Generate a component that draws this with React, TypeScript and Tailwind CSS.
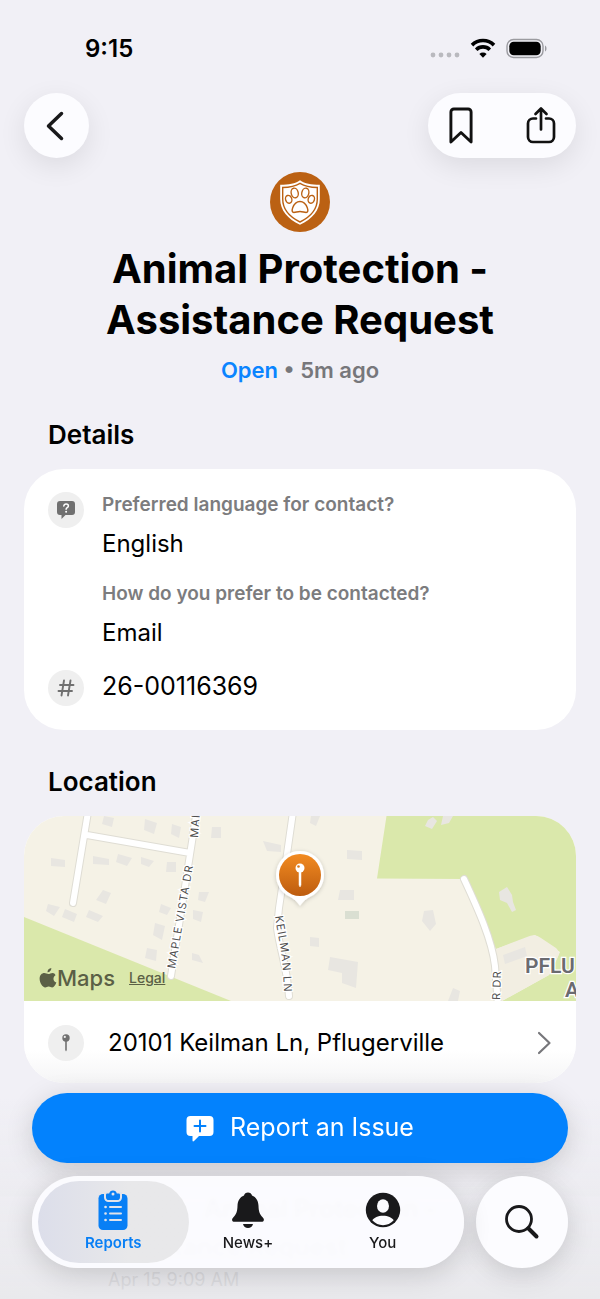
import type { ReactNode } from "react";

function StatusIcons() {
  return (
    <svg width="118" height="22" viewBox="0 0 118 22" aria-hidden="true">
      <g fill="#b9b9be">
        <circle cx="3" cy="17" r="2.4" />
        <circle cx="11" cy="17" r="2.4" />
        <circle cx="19" cy="17" r="2.4" />
        <circle cx="27" cy="17" r="2.4" />
      </g>
      <g fill="none" stroke="#000" strokeWidth="3.6">
        <path d="M42 7.1a15.6 15.6 0 0 1 22 0" />
        <path d="M46.2 11.7a9.7 9.7 0 0 1 13.6 0" />
      </g>
      <path d="M53 19.700l-3.600-3.700a5.100 5.100 0 0 1 7.200 0z" fill="#000" />
      <rect x="77" y="1.500" width="36" height="18" rx="6.500" fill="none" stroke="#9b9ba0" strokeWidth="1.400" />
      <rect x="79.300" y="3.800" width="31.400" height="13.400" rx="4.400" fill="#000" />
      <path d="M115 7.500c2 .8 2 5.200 0 6z" fill="#9b9ba0" />
    </svg>
  );
}

function PawShield() {
  return (
    <svg width="60" height="60" viewBox="0 0 60 60" aria-hidden="true">
      <circle cx="30" cy="30" r="30" fill="#bb6113" />
      <path d="M30 8.2c5 3.4 11 4.6 19.8 4.6V27c0 11.500-7.500 20-19.800 25.800C17.700 47 10.200 38.500 10.200 27V12.800C19 12.800 25 11.600 30 8.200z" fill="#fff" />
      <g fill="none" stroke="#bb6113" strokeWidth="1.400">
        <path d="M30 11.300c4.700 2.800 10 4 17.300 4.200V27c0 10.200-6.600 17.700-17.300 23C19.300 44.700 12.700 37.200 12.700 27V15.500C20 15.300 25.300 14.100 30 11.300z" />
        <ellipse cx="24.700" cy="21" rx="3.500" ry="4.900" transform="rotate(-14 24.700 21)" />
        <ellipse cx="35.300" cy="21" rx="3.500" ry="4.900" transform="rotate(14 35.300 21)" />
        <ellipse cx="18.700" cy="27.300" rx="3.100" ry="4" transform="rotate(-18 18.700 27.300)" />
        <ellipse cx="41.300" cy="27.300" rx="3.100" ry="4" transform="rotate(18 41.300 27.300)" />
        <path d="M30 29.500c4.600 0 6.200 3.300 7.300 6.300 1.100 3 .5 4.700-1.200 4.700-2 0-3.500-1-6.100-1s-4.100 1-6.100 1c-1.700 0-2.300-1.700-1.200-4.700 1.100-3 2.700-6.300 7.300-6.300z" />
      </g>
    </svg>
  );
}

function Badge({ children }: { children: ReactNode }) {
  return (
    <span className="flex size-9 shrink-0 items-center justify-center rounded-full bg-[#efefef] text-[#707070]">
      {children}
    </span>
  );
}

function LocationMap() {
  return (
    <svg
      className="block h-[185px] w-full"
      viewBox="0 0 552 185"
      preserveAspectRatio="xMidYMid slice"
      role="img"
      aria-label="Map of Keilman Ln"
    >
      <defs>
        <linearGradient id="pin" x1="0" y1="0" x2="0" y2="1">
          <stop offset="0" stopColor="#f28b21" />
          <stop offset="1" stopColor="#bd5c0f" />
        </linearGradient>
        <filter id="soft" x="-30%" y="-30%" width="160%" height="160%">
          <feDropShadow dx="0" dy="1" stdDeviation="2" floodOpacity="0.2" />
        </filter>
      </defs>
      <rect width="552" height="185" fill="#f5f2e6" />
      <g fill="#dae8ab">
        <path d="M0 101L207 185H0z" />
        <path d="M362.500 0H552V185H478L498 174 525 159 536 136 511 119 472 133 440 63 353 62.500z" />
      </g>
      <path d="M472 133L503 121Q511 117 517 122L532 132Q537 136 533 143L525 159 478 185z" fill="#f2eee2" />
      <g fill="#e8e6e1">
        <path d="M80 0l10 2-2 9-10-3zM121 3l12 4-3 11-10-4zM148 8l9 3-2 11-8-4zM188 11h9v11h-10zM239 25l18 4v7l-14-1zM27 42l14 2v7l-14-1zM69 40l16 3v6l-16-1zM94 38l14 4-5 8-11-4zM117 41l13 4-5 6-8-3zM143 46h9v10h-10zM79 74l8 3-5 11-10-4zM24 88l12 3-6 9-8-5zM41 93l12 5-3 8-12-5zM65 94l14 6-5 6-12-5zM175 76h10l-4 10-7-2zM137 88l10 4-4 7-8-3zM169 94l10 2-2 10-8-3zM131 107l10 3-3 14-9-5zM123 132l10 2-1 11-11-3zM168 137l7 2 4 8-11-3z" />
        <path d="M287 0h9l-4 10-6-3zM323 34l15 1v9l-15-1zM316 74h14v10h-16zM400 95l9-1 3 14-6 7-8-10zM286 121l9 1v9l-9-1zM306 141l28 5-2 26-14-5v-10l-14-3zM429 172l7 3-2 10h-10z" />
        <path d="M404 4l5-3 4 4-5 8-7-3zM419 0h10l-4 7-8 2zM475 76l8-5 5 8 1 7 3 8-4 2-5-9-7-3z" />
        <path d="M479 139l22-8 2 9-22 8z" />
      </g>
      <rect x="321" y="95" width="14" height="8" fill="#dadfd2" />
      {[
        { w: 8, c: "#dfddd4" },
        { w: 6, c: "#ffffff" },
      ].map((s) => (
        <g key={s.w} fill="none" stroke={s.c} strokeWidth={s.w} strokeLinecap="round" strokeLinejoin="round">
          <path d="M64-4L49 87M63 19L166 37M172 0L165 45 147 160" />
          <path d="M269-4L262 45 255 92 253 112C256 135 263 150 265 180" />
          <path d="M440 63C454 93 468 124 471 150L474 190" />
        </g>
      ))}
      <g fontFamily="Inter, sans-serif" fontSize="11" fill="#505050" stroke="#fff" strokeWidth="2.500" paintOrder="stroke" className="tracking-widest">
        <text transform="translate(151 153) rotate(-80)">MAPLE VISTA DR</text>
        <text transform="translate(174 22) rotate(-86)">MAI</text>
        <path id="keilman" d="M251 100C254 122 259 135 260 176" fill="none" stroke="none" />
        <text>
          <textPath href="#keilman">KEILMAN LN</textPath>
        </text>
        <text transform="translate(476 184) rotate(-88)">R DR</text>
      </g>
      <g fontFamily="Roboto, sans-serif" fontSize="21" fontWeight="600" fill="#6b6b70" stroke="#fff" strokeWidth="2.500" paintOrder="stroke">
        <text x="501" y="157">PFLU</text>
        <text x="541" y="181">A</text>
      </g>
      <g filter="url(#soft)">
        <path d="M276 35a24 24 0 0 1 10 45.800c-4 2-7 5-10 9-3-4-6-7-10-9A24 24 0 0 1 276 35z" fill="#fff" />
      </g>
      <circle cx="276" cy="59" r="21" fill="url(#pin)" />
      <circle cx="276" cy="52" r="4.500" fill="#fff" />
      <path d="M275 55h2v14l-1 2-1-2z" fill="#fff" stroke="#fff" strokeWidth=".5" />
      <circle cx="274.500" cy="50.500" r="1.300" fill="#dc7a1b" />
    </svg>
  );
}

function SmallPin() {
  return (
    <svg width="12" height="20" viewBox="0 0 12 20" aria-hidden="true">
      <circle cx="6" cy="5" r="3.700" fill="currentColor" />
      <path d="M5.200 8h1.600v9l-.8 1.500-.8-1.500z" fill="currentColor" />
      <circle cx="4.800" cy="3.900" r="1.100" fill="#efefef" />
    </svg>
  );
}

export default function App() {
  return (
    <div className="relative min-h-screen overflow-hidden bg-[#f1f0f6] font-['Inter',sans-serif] text-black">
      <div className="flex items-center justify-between pt-[31px] pr-[52px] pb-[26px] pl-[85px]">
        <time className="text-2xl leading-9 font-semibold">9:15</time>
        <StatusIcons />
      </div>

      <header className="flex items-center justify-between px-6">
        <button aria-label="Back" className="flex size-[65px] items-center justify-center rounded-full bg-[#fcfcff] shadow-[0_8px_28px_rgba(0,0,0,0.09)]">
          <svg width="24" height="32" viewBox="0 0 24 32" fill="none" stroke="#19191b" strokeWidth="3.500" strokeLinecap="round" strokeLinejoin="round" aria-hidden="true">
            <path d="M16.500 3.500L3.500 16l13 12.500" />
          </svg>
        </button>
        <div className="flex h-[65px] items-center gap-[42px] rounded-full bg-[#fcfcff] px-[15px] shadow-[0_8px_28px_rgba(0,0,0,0.09)]">
          <button aria-label="Bookmark" className="flex w-9 justify-center">
            <svg width="26" height="40" viewBox="0 0 26 40" fill="none" stroke="#111" strokeWidth="2.900" strokeLinejoin="round" aria-hidden="true">
              <path d="M2.900 36V6a3 3 0 0 1 3-3h14.200a3 3 0 0 1 3 3v30L13 26.500z" />
            </svg>
          </button>
          <button aria-label="Share" className="flex w-10 justify-center">
            <svg width="32" height="40" viewBox="0 0 32 40" fill="none" stroke="#111" strokeWidth="2.700" strokeLinecap="round" strokeLinejoin="round" aria-hidden="true">
              <path d="M11 12.500H8a5 5 0 0 0-5 5V31a5 5 0 0 0 5 5h16a5 5 0 0 0 5-5V17.500a5 5 0 0 0-5-5h-3M16 23.500v-21M10.500 8L16 2.500 21.500 8" />
            </svg>
          </button>
        </div>
      </header>

      <main className="px-6">
        <div className="mt-[14px] flex flex-col items-center text-center">
          <PawShield />
          <h1 className="mt-[11px] max-w-[440px] text-[40px] leading-[51px] font-bold">Animal Protection - Assistance Request</h1>
          <p className="mt-[11px] text-[22px] leading-7 font-semibold text-[#77777b]">
            <span className="text-[#0a84ff]">Open</span> • 5m ago
          </p>
        </div>

        <h2 className="mt-[35px] px-6 text-[26px] leading-8 font-semibold">Details</h2>
        <section className="mt-[18px] flex flex-col gap-[21px] rounded-[40px] bg-white px-6 pt-[23px] pb-6">
          <div className="flex gap-[18px]">
            <Badge>
              <svg width="20" height="20" viewBox="0 0 20 20" aria-hidden="true">
                <path d="M4 1h12a3 3 0 0 1 3 3v8a3 3 0 0 1-3 3H9.500L5.500 19v-4H4a3 3 0 0 1-3-3V4a3 3 0 0 1 3-3z" fill="currentColor" />
                <path d="M7.800 6c.2-1.300 1-2 2.300-2 1.400 0 2.300.8 2.300 1.900 0 1.700-2.300 1.700-2.300 3.300" fill="none" stroke="#fff" strokeWidth="1.500" strokeLinecap="round" />
                <circle cx="10.100" cy="11.700" r="1" fill="#fff" />
              </svg>
            </Badge>
            <dl className="pt-px">
              <dt className="text-[19px] leading-6 font-semibold text-[#7c7c7e]">Preferred language for contact?</dt>
              <dd className="mt-[11px] text-2xl leading-8">English</dd>
              <dt className="mt-[22px] text-[19px] leading-6 font-semibold text-[#7c7c7e]">How do you prefer to be contacted?</dt>
              <dd className="mt-[11px] text-2xl leading-8">Email</dd>
            </dl>
          </div>
          <div className="flex gap-[18px]">
            <Badge>
              <svg width="18" height="18" viewBox="0 0 18 18" fill="none" stroke="currentColor" strokeWidth="1.900" strokeLinecap="round" aria-hidden="true">
                <path d="M7 1.500l-2.500 15M13.500 1.500L11 16.500M3 6h13.500M1.500 12H15" />
              </svg>
            </Badge>
            <p className="text-[25px] leading-8">26-00116369</p>
          </div>
        </section>

        <h2 className="mt-9 px-6 text-[26px] leading-8 font-semibold">Location</h2>
        <section className="mt-[18px] overflow-hidden rounded-[40px] bg-white">
          <div className="relative">
            <LocationMap />
            <div className="absolute bottom-[7px] left-[15px] flex items-center gap-[14px] text-[#5b6046]">
              <span className="flex items-center text-[22px] leading-8 font-medium">
                <svg width="18" height="22" viewBox="0 0 17 21" fill="currentColor" aria-hidden="true">
                  <path d="M11.700 1c.1 2.300-1.700 4.200-3.700 4.100C7.800 3 9.700 1.100 11.700 1zM15.700 7.800c-3 1.900-2.400 5.900.8 7.100-.8 2.200-2.300 4.600-4 4.600-1.300 0-1.700-.8-3.300-.8s-2.100.8-3.300.8C3.200 19.500.5 15 .5 11.300c0-3.500 2.200-5.500 4.500-5.500 1.500 0 2.500.9 3.900.9 1.200 0 2.300-1 4.100-1 1.100 0 2.100.7 2.700 2.100z" />
                </svg>
                Maps
              </span>
              <a href="#legal" className="text-sm leading-8 font-medium underline">Legal</a>
            </div>
          </div>
          <a href="#location" className="flex items-center gap-6 bg-linear-to-b from-white from-60% to-[#f5f5f6] px-6 pt-6 pb-[22px]">
            <Badge>
              <SmallPin />
            </Badge>
            <span className="flex-1 text-2xl leading-8">20101 Keilman Ln, Pflugerville</span>
            <svg width="16" height="24" viewBox="0 0 16 24" fill="none" stroke="#77777b" strokeWidth="2.200" strokeLinecap="round" strokeLinejoin="round" aria-hidden="true">
              <path d="M3 2l10.500 10L3 22" />
            </svg>
          </a>
        </section>

        <section className="mt-[107px] pl-[84px]">
          <h3 className="text-[25px] leading-[38px] font-semibold text-[#8e8e93]">
            <span className="block indent-[96px]">Animal Protection -</span>
            <span className="block">Assistance Request</span>
          </h3>
          <p className="text-lg leading-7 text-[#bcbcc2]">Apr 15 9:09 AM</p>
        </section>
      </main>

      <div className="fixed inset-x-0 bottom-0 flex flex-col gap-[13px] bg-linear-to-b from-transparent to-[#e8e8eb]/80 px-8 pb-[31px]">
        <button className="flex h-[70px] items-center justify-center gap-4 rounded-full bg-[#0382fd] text-[25px] text-white shadow-[0_6px_28px_rgba(0,0,0,0.16)]">
          <svg width="28" height="27" viewBox="0 0 28 27" aria-hidden="true">
            <path d="M4.500 1h19a4 4 0 0 1 4 4v12a4 4 0 0 1-4 4H13l-5 5c-.8.700-1.500.4-1.500-.6V21h-2a4 4 0 0 1-4-4V5a4 4 0 0 1 4-4z" fill="#fff" />
            <path d="M14 5.500v11M8.500 11h11" stroke="#0382fd" strokeWidth="2" strokeLinecap="round" />
          </svg>
          Report an Issue
        </button>
        <div className="flex gap-3">
          <nav className="grid h-[92px] flex-1 grid-cols-3 rounded-full bg-[#fcfcff]/95 px-[14px] py-[5px] text-[15px] leading-5 font-medium text-[#19191b] shadow-[0_6px_28px_rgba(0,0,0,0.16)] backdrop-blur-[2px]">
            <a href="#reports" aria-current="page" className="-mx-2 flex flex-col items-center gap-px rounded-full bg-linear-to-r from-[#dcdeea] to-[#e8e8ea] to-60% pt-[7px] font-semibold text-[#087ff5]">
              <svg width="32" height="44" viewBox="0 0 32 44" aria-hidden="true">
                <rect x="1.500" y="6" width="29" height="36" rx="4.500" fill="currentColor" />
                <g fill="#e2e3ea">
                  <path d="M7 4h18v5.500a4.500 4.500 0 0 1-4.500 4.500h-9A4.500 4.500 0 0 1 7 9.500z" />
                </g>
                <path d="M10.300 5.500h1.900a3.900 3.900 0 0 1 7.600 0h1.900a1.300 1.300 0 0 1 1.300 1.300v2.400a2.800 2.800 0 0 1-2.800 2.800h-8.400A2.800 2.800 0 0 1 9 9.200V6.800a1.300 1.300 0 0 1 1.300-1.300z" fill="currentColor" />
                <circle cx="16" cy="6" r="1.500" fill="#e2e3ea" />
                <g stroke="#e2e3ea" strokeWidth="2" strokeLinecap="round">
                  <path d="M13 19h11M13 25.500h11M13 32h11" />
                  <path d="M8.500 19h.1M8.500 25.500h.1M8.500 32h.1" strokeWidth="2.600" />
                </g>
              </svg>
              Reports
            </a>
            <a href="#news" className="flex flex-col items-center gap-px pt-[7px]">
              <svg width="34" height="44" viewBox="0 0 34 44" fill="currentColor" aria-hidden="true">
                <path d="M17 4.500c2 0 3.600 1.200 4 2.900 4.200 1.600 6.300 5.300 6.500 10.400.2 5.600 1 8.500 4.300 11.700 1.900 1.900 1.300 4.300-1.300 4.300h-27c-2.600 0-3.200-2.400-1.300-4.300 3.300-3.200 4.100-6.100 4.300-11.700.2-5.100 2.300-8.800 6.500-10.400.4-1.700 2-2.900 4-2.900zM12 36h10c-.6 2.600-2.500 4-5 4s-4.400-1.400-5-4z" />
              </svg>
              News+
            </a>
            <a href="#you" className="flex flex-col items-center gap-px pt-[7px]">
              <svg width="36" height="44" viewBox="0 0 36 44" aria-hidden="true">
                <circle cx="18" cy="22" r="17.200" fill="currentColor" />
                <ellipse cx="18" cy="18" rx="6" ry="6.800" fill="#fcfcff" />
                <path d="M7.300 32.300C9 29.500 13 27.700 18 27.700s9 1.800 10.700 4.600C26 35.500 22 37.200 18 37.200S10 35.500 7.300 32.300z" fill="#fcfcff" />
              </svg>
              You
            </a>
          </nav>
          <button aria-label="Search" className="flex size-[92px] items-center justify-center rounded-full bg-[#fcfcff] shadow-[0_6px_28px_rgba(0,0,0,0.16)]">
            <svg width="36" height="36" viewBox="0 0 36 36" fill="none" stroke="#19191b" strokeLinecap="round" aria-hidden="true">
              <circle cx="15" cy="15" r="12.500" strokeWidth="2.800" />
              <path d="M24.500 24.500l8 8" strokeWidth="4" />
            </svg>
          </button>
        </div>
      </div>
    </div>
  );
}
